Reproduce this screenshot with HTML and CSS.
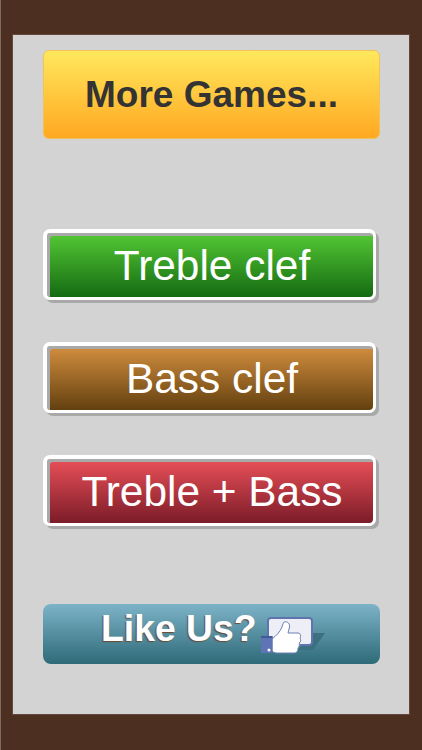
FILE: index.html
```html
<!DOCTYPE html>
<html lang="en">
<head>
<meta charset="utf-8">
<title>Music Notes</title>
<link rel="stylesheet" href="styles.css">
</head>
<body>
<main class="panel">
  <button class="more">More Games...</button>
  <nav class="modes">
    <button class="mode treble">Treble clef</button>
    <button class="mode bass">Bass clef</button>
    <button class="mode both">Treble + Bass</button>
  </nav>
  <button class="like">
    <span class="like-text">Like Us?</span>
    <svg class="like-icon" viewBox="0 0 66 40" width="66" height="40" aria-hidden="true">
      <path d="M52 16H65L53 33H38Z" fill="#3c6f7f"/>
      <rect x="8" y="1" width="44" height="27" rx="3" fill="#eeeef6" stroke="#5f74ae" stroke-width="2"/>
      <path d="M12 22C16 19 20 15 22 10C23 7 23 6 24 5C28 4 30 7 29.500 10L28 16H38C41 16 41 20 40 21C41 23 41 25 39 26C40 28 39 30 38 31C38 35 36 36 34 36H17C15 36 13 35 12 34Z" fill="#fff" stroke="#6d80b4" stroke-width="1" stroke-linejoin="round"/>
      <rect x="1" y="19" width="11.500" height="17" fill="#5f74b4"/>
      <rect x="1" y="19" width="11.500" height="2" fill="#3f5a94"/>
      <circle cx="9" cy="33" r="1.500" fill="#fff"/>
    </svg>
  </button>
</main>
</body>
</html>
```
FILE: styles.css
```css
* {
  box-sizing: border-box;
}

html,
body {
  margin: 0;
  height: 100%;
}

body {
  background: #4c2f20;
  padding: 35px 13px 36px 12px;
  border-left: 1px solid #7d6a60;
  font-family: "Liberation Sans", Arial, sans-serif;
}

button {
  display: block;
  margin: 0;
  padding: 0;
  font-family: inherit;
  cursor: pointer;
}

.panel {
  height: 679px;
  background: #d3d3d3;
  padding: 15px 29px 0 30px;
  box-shadow: 0 0 0 1px rgba(255, 255, 255, 0.12);
}

.more {
  width: 337px;
  height: 89px;
  border: 1px solid #f0c25a;
  border-radius: 6px;
  background: linear-gradient(#ffe85c, #ffa821);
  color: #333;
  font-size: 37px;
  font-weight: bold;
}

.modes {
  display: flex;
  flex-direction: column;
  gap: 42px;
  margin-top: 90px;
}

.mode {
  width: 333px;
  height: 71px;
  padding: 2px 0 0 4px;
  border-style: solid;
  border-color: #fff;
  border-width: 4px 3px 3px 4px;
  border-radius: 7px;
  box-shadow: 3px 3px 0 #a9a9a9, inset 3px 3px 0 #a9a9a9;
  color: #fff;
  font-size: 42.400px;
  text-align: center;
}

.treble {
  background: linear-gradient(#55c935, #146a12);
}

.bass {
  background: linear-gradient(#d38f3f, #63400f);
}

.both {
  background: linear-gradient(#ea5058, #7b1c28);
}

.like {
  position: relative;
  width: 337px;
  height: 60px;
  margin-top: 78px;
  border: 0;
  border-radius: 8px;
  background: linear-gradient(#7db3c8, #2e6a78);
  color: #fff;
  font-size: 37.300px;
  font-weight: bold;
  text-align: left;
}

.like-text {
  display: block;
  margin: -11px 0 0 58px;
  text-shadow: -1px 1px 1px #6b4a30;
}

.like-icon {
  position: absolute;
  left: 217px;
  top: 13px;
}
```
